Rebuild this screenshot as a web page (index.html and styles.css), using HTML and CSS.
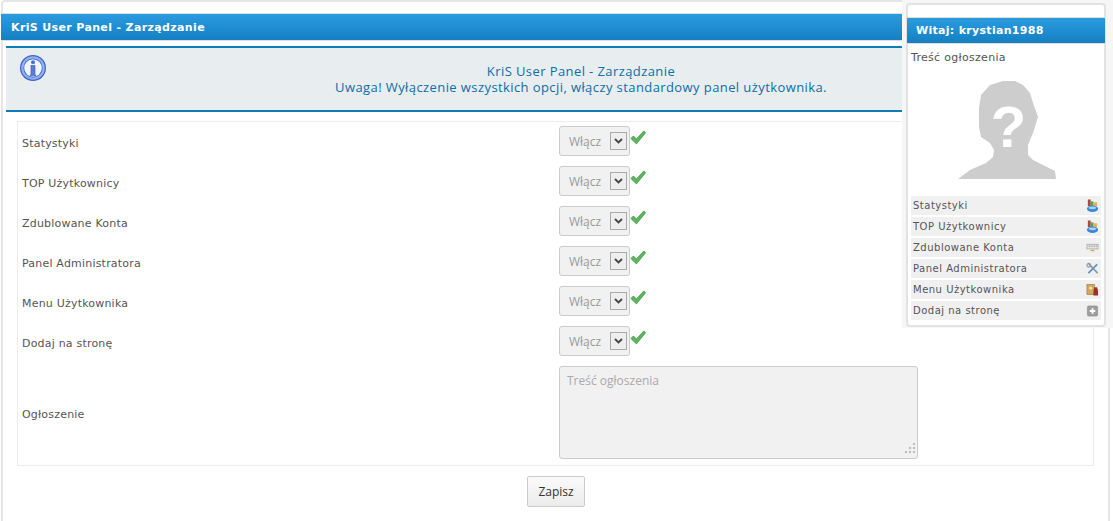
FILE: index.html
```html
<!DOCTYPE html>
<html lang="pl">
<head>
<meta charset="utf-8">
<title>KriS User Panel - Zarządzanie</title>
<link rel="stylesheet" href="styles.css">
</head>
<body>
<main class="panel">
  <h1 class="bar">KriS User Panel - Zarządzanie</h1>
  <section class="notice">
    <svg class="info" width="28" height="28" viewBox="0 0 28 28">
      <circle cx="14" cy="14" r="13" fill="#3f63c4"/>
      <circle cx="14" cy="14" r="11.8" fill="#8fb0f2"/>
      <circle cx="14" cy="14" r="9.6" fill="#3f63c4"/>
      <circle cx="14" cy="14" r="8.8" fill="#f1f4fc"/>
      <circle cx="14" cy="8.2" r="2" fill="#4a6fd0"/>
      <path d="M11.8 11.5h4.2v8.5l1 1.8h-6l1-1.8v-6.800z" fill="#5a7ed8" stroke="#3557b5" stroke-width=".6"/>
    </svg>
    <p class="notice-text">KriS User Panel - Zarządzanie<br>Uwaga! Wyłączenie wszystkich opcji, włączy standardowy panel użytkownika.</p>
  </section>
  <div class="form">
    <div class="row"><span class="label">Statystyki</span><span class="field"><span class="select">Włącz<i class="arrow"><svg width="9" height="6" viewBox="0 0 9 6"><path d="M1 1l3.500 3.500L8 1" fill="none" stroke="#444" stroke-width="1.800"/></svg></i></span><svg class="check" width="16" height="15" viewBox="0 0 15 14"><path d="M.8 8l2.400-2.400 2.800 2.800L13 .8l1.700 1.700L6 13z" fill="#5cb85c" stroke="#3f9142" stroke-width=".7"/></svg></span></div>
    <div class="row"><span class="label">TOP Użytkownicy</span><span class="field"><span class="select">Włącz<i class="arrow"><svg width="9" height="6" viewBox="0 0 9 6"><path d="M1 1l3.500 3.500L8 1" fill="none" stroke="#444" stroke-width="1.800"/></svg></i></span><svg class="check" width="16" height="15" viewBox="0 0 15 14"><path d="M.8 8l2.400-2.400 2.800 2.800L13 .8l1.700 1.700L6 13z" fill="#5cb85c" stroke="#3f9142" stroke-width=".7"/></svg></span></div>
    <div class="row"><span class="label">Zdublowane Konta</span><span class="field"><span class="select">Włącz<i class="arrow"><svg width="9" height="6" viewBox="0 0 9 6"><path d="M1 1l3.500 3.500L8 1" fill="none" stroke="#444" stroke-width="1.800"/></svg></i></span><svg class="check" width="16" height="15" viewBox="0 0 15 14"><path d="M.8 8l2.400-2.400 2.800 2.800L13 .8l1.700 1.700L6 13z" fill="#5cb85c" stroke="#3f9142" stroke-width=".7"/></svg></span></div>
    <div class="row"><span class="label">Panel Administratora</span><span class="field"><span class="select">Włącz<i class="arrow"><svg width="9" height="6" viewBox="0 0 9 6"><path d="M1 1l3.500 3.500L8 1" fill="none" stroke="#444" stroke-width="1.800"/></svg></i></span><svg class="check" width="16" height="15" viewBox="0 0 15 14"><path d="M.8 8l2.400-2.400 2.800 2.800L13 .8l1.700 1.700L6 13z" fill="#5cb85c" stroke="#3f9142" stroke-width=".7"/></svg></span></div>
    <div class="row"><span class="label">Menu Użytkownika</span><span class="field"><span class="select">Włącz<i class="arrow"><svg width="9" height="6" viewBox="0 0 9 6"><path d="M1 1l3.500 3.500L8 1" fill="none" stroke="#444" stroke-width="1.800"/></svg></i></span><svg class="check" width="16" height="15" viewBox="0 0 15 14"><path d="M.8 8l2.400-2.400 2.800 2.800L13 .8l1.700 1.700L6 13z" fill="#5cb85c" stroke="#3f9142" stroke-width=".7"/></svg></span></div>
    <div class="row"><span class="label">Dodaj na stronę</span><span class="field"><span class="select">Włącz<i class="arrow"><svg width="9" height="6" viewBox="0 0 9 6"><path d="M1 1l3.500 3.500L8 1" fill="none" stroke="#444" stroke-width="1.800"/></svg></i></span><svg class="check" width="16" height="15" viewBox="0 0 15 14"><path d="M.8 8l2.400-2.400 2.800 2.800L13 .8l1.700 1.700L6 13z" fill="#5cb85c" stroke="#3f9142" stroke-width=".7"/></svg></span></div>
    <div class="row row-area"><span class="label">Ogłoszenie</span><span class="field"><span class="area">Treść ogłoszenia<svg class="grip" width="13" height="13" viewBox="0 0 13 13"><g fill="#bbb"><rect x="10" y="1" width="2" height="2"/><rect x="6" y="5" width="2" height="2"/><rect x="10" y="5" width="2" height="2"/><rect x="2" y="9" width="2" height="2"/><rect x="6" y="9" width="2" height="2"/><rect x="10" y="9" width="2" height="2"/></g></svg></span></span></div>
  </div>
  <div class="actions"><button class="save" type="button">Zapisz</button></div>
</main>

<aside class="side">
  <div class="side-card">
    <h2 class="bar side-bar">Witaj: krystian1988</h2>
    <p class="side-text">Treść ogłoszenia</p>
    <svg class="avatar" width="98" height="98" viewBox="0 0 98 98">
      <path d="M45 0L57 0L65 4L72 12L75 22L80 36L75 52L70 64L70 74L75 79L97 90L98 98L0 98L12 89L28 82L35 76L36 69L32 62L23 56L21 46L21 27L23 14L32 4z" fill="#cdcdcd"/>
      <text x="50.500" y="66" text-anchor="middle" class="qmark">?</text>
    </svg>
    <nav class="menu">
      <a class="item">Statystyki<svg width="13" height="14" viewBox="0 0 14 14"><rect x="2" y="0" width="3" height="7" fill="#a9483f"/><rect x="5" y="2" width="3" height="5" fill="#58a055"/><rect x="8" y="3" width="4" height="4" fill="#e6b34a"/><ellipse cx="7" cy="10" rx="6" ry="3.500" fill="#3a87d6"/><ellipse cx="7" cy="9" rx="4" ry="1.500" fill="#a8d2f5"/></svg></a>
      <a class="item">TOP Użytkownicy<svg width="13" height="14" viewBox="0 0 14 14"><rect x="2" y="0" width="3" height="7" fill="#a9483f"/><rect x="5" y="2" width="3" height="5" fill="#58a055"/><rect x="8" y="3" width="4" height="4" fill="#e6b34a"/><ellipse cx="7" cy="10" rx="6" ry="3.500" fill="#3a87d6"/><ellipse cx="7" cy="9" rx="4" ry="1.500" fill="#a8d2f5"/></svg></a>
      <a class="item">Zdublowane Konta<svg width="13" height="14" viewBox="0 0 14 14"><rect x="1" y="3" width="12" height="5" fill="#e4e4e4" stroke="#a5a5a5" stroke-width=".8"/><path d="M3 5h1M5 5h1M7 5h1M9 5h1M11 5h1" stroke="#777" stroke-width="1"/><rect x="5" y="9" width="4" height="1.500" fill="#d9a24e"/></svg></a>
      <a class="item">Panel Administratora<svg width="13" height="14" viewBox="0 0 14 14"><path d="M3 1.500l9.500 10" stroke="#8c9aa6" stroke-width="1.800"/><path d="M12 2l-9.500 9.500" stroke="#5f94bf" stroke-width="2"/><circle cx="3" cy="3" r="2" fill="none" stroke="#8c9aa6" stroke-width="1.200"/></svg></a>
      <a class="item">Menu Użytkownika<svg width="13" height="14" viewBox="0 0 14 14"><rect x="1" y="1" width="8" height="11" fill="#d3a95c" stroke="#8a6b38" stroke-width=".6"/><circle cx="5" cy="5" r="1.500" fill="#f3e3b5"/><path d="M9 4h3l1 4v5H8V8z" fill="#9c2f2f"/></svg></a>
      <a class="item">Dodaj na stronę<svg width="13" height="14" viewBox="0 0 14 14"><rect x="1.500" y="1.500" width="11" height="11" rx="1.500" fill="#9d9d9d" stroke="#888" stroke-width=".6"/><path d="M7 4v6M4 7h6" stroke="#fff" stroke-width="2"/></svg></a>
    </nav>
  </div>
</aside>
</body>
</html>
```
FILE: styles.css
```css
* { box-sizing: border-box; }
html, body { margin: 0; padding: 0; height: 100%; overflow: hidden; background: #fff; }
body { font-family: "DejaVu Sans", Verdana, sans-serif; font-size: 11px; color: #555; }

.panel {
  width: 1109px;
  height: 540px;
  margin-left: 1px;
  padding-top: 13px;
  border: 2px solid #e6e6e6;
  border-bottom: 0;
  border-radius: 4px 4px 0 0;
}
.panel > .bar { margin-left: -2px; margin-top: -2px; }

.bar {
  margin: 0;
  height: 28px;
  padding: 0 10px;
  display: flex;
  align-items: center;
  border-top: 1px solid #ddd;
  border-bottom: 1px solid #ddd;
  background: linear-gradient(#2b9be0, #1480c2);
  color: #fff;
  font-size: 11px;
  font-weight: bold;
  letter-spacing: .36px;
}

.notice {
  position: relative;
  height: 66px;
  margin: 5px 3px 0 3px;
  border-top: 2px solid #0f7cb3;
  border-bottom: 2px solid #0f7cb3;
  background: #e8edf0;
}
.info { position: absolute; left: 13px; top: 6px; }
.notice-text {
  margin: 0;
  padding: 15px 0 0 0;
  width: 1150px;
  text-align: center;
  font-family: "Open Sans", sans-serif;
  font-size: 13px;
  line-height: 16px;
  letter-spacing: .41px;
  color: #0d6ea8;
}

.form {
  margin: 9px 14px 0 14px;
  border: 1px solid #ececec;
}
.row { display: grid; grid-template-columns: 541px 1fr; height: 40px; align-items: center; }
.row-area { height: 103px; }
.label { padding: 2px 0 0 4px; color: #555; letter-spacing: .2px; }
.field { display: flex; align-items: flex-start; margin-top: -2px; }
.select {
  position: relative;
  width: 71px;
  height: 30px;
  padding: 6px 0 0 9px;
  border: 1px solid #ccc;
  border-radius: 3px;
  background: #f1f1f1;
  font-family: "Open Sans", sans-serif;
  font-size: 12px;
  color: #999;
}
.arrow {
  position: absolute;
  right: 2px;
  top: 5px;
  width: 17px;
  height: 18px;
  display: flex;
  align-items: center;
  justify-content: center;
  border: 1px solid #aaa;
  background: #eee;
}
.check { margin: 4px 0 0 0; }
.area {
  position: relative;
  display: block;
  width: 359px;
  height: 93px;
  padding: 5px 7px;
  border: 1px solid #ccc;
  border-radius: 3px;
  background: #f1f1f1;
  font-family: "Open Sans", sans-serif;
  font-size: 12px;
  color: #aaa;
}
.grip { position: absolute; right: 1px; bottom: 3px; }

.actions { display: flex; justify-content: center; padding: 10px 0 0 0; margin-left: 1px; }
.save {
  width: 58px;
  height: 31px;
  border: 1px solid #ccc;
  border-radius: 2px;
  background: linear-gradient(#fafafa, #ececec);
  font-family: "Open Sans", sans-serif;
  font-size: 12px;
  color: #333;
  padding: 0;
}

.side {
  position: absolute;
  left: 902px;
  top: 0;
  width: 211px;
  height: 328px;
  background: #f6f6f6;
  padding: 3px 7px 0 4px;
}
.side-card {
  height: 324px;
  padding-top: 12px;
  background: #fff;
  border: 2px solid #e2e2e2;
  border-radius: 4px;
}
.side-bar { margin: 0 -1px; height: 27px; padding-left: 9px; letter-spacing: .3px; }
.side-text { margin: 0; padding: 7px 0 0 3px; font-size: 11px; line-height: 14px; color: #555; letter-spacing: .3px; }
.avatar { display: block; margin: 16px 0 0 50px; }
.qmark { font-family: "Liberation Sans", sans-serif; font-weight: bold; font-size: 58px; fill: #fff; }
.menu { margin: 17px 3px 0 3px; display: flex; flex-direction: column; gap: 2px; }
.item {
  height: 19px;
  padding: 0 2px;
  display: flex;
  align-items: center;
  justify-content: space-between;
  background: #f0f0f0;
  color: #555;
  font-size: 10px;
  letter-spacing: .5px;
}
```
